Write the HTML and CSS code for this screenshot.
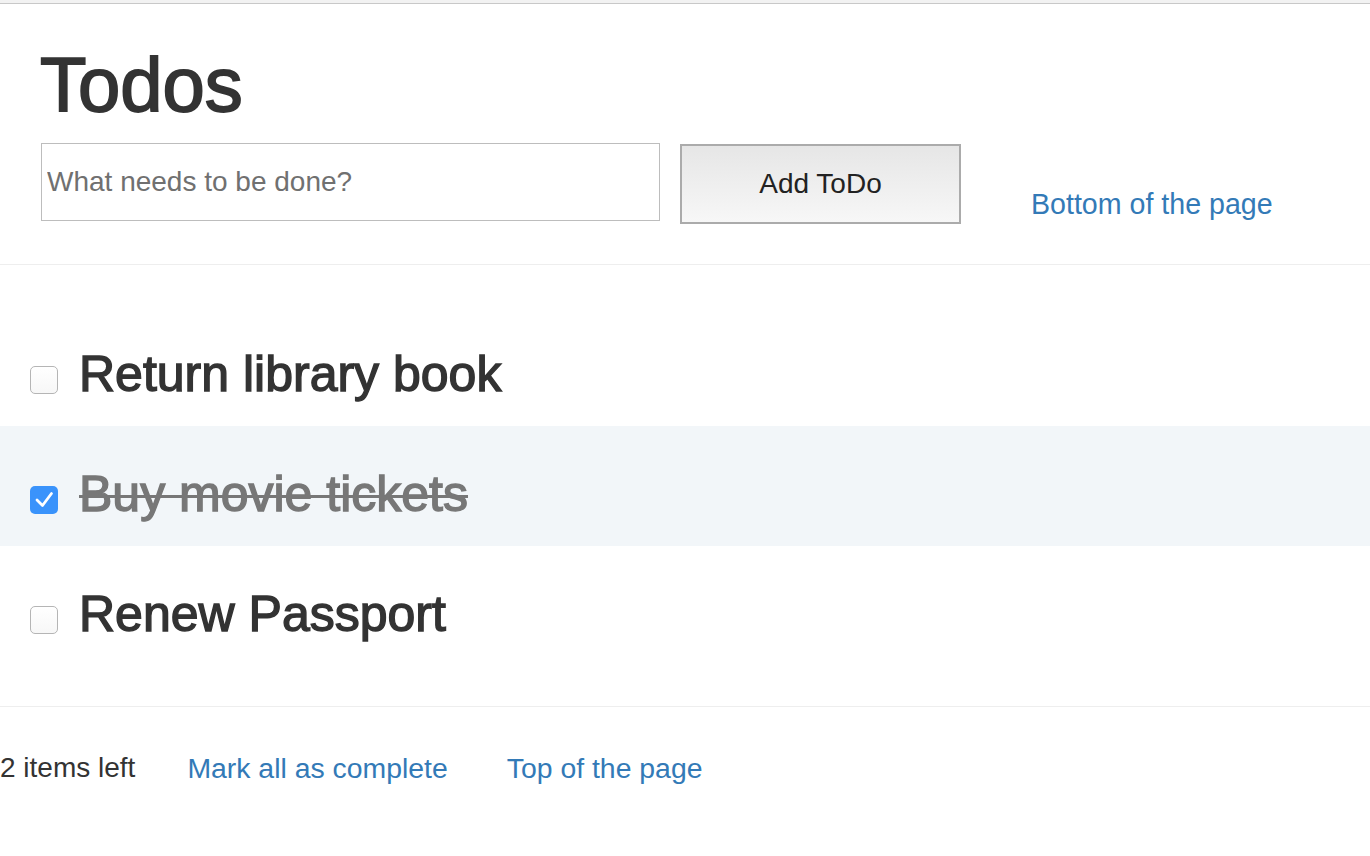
FILE: index.html
```html
<!DOCTYPE html>
<html lang="en">
<head>
<meta charset="utf-8">
<title>Todos</title>
<link rel="stylesheet" href="styles.css">
</head>
<body>
<div class="chrome"></div>
<header class="header">
  <h1 class="title">Todos</h1>
  <form class="new-todo" onsubmit="return false">
    <input class="todo-input" type="text" placeholder="What needs to be done?">
    <button class="add-btn" type="submit">Add ToDo</button>
    <a class="link bottom-link" href="#bottom">Bottom of the page</a>
  </form>
</header>
<hr class="rule rule-top">
<ul class="todo-list">
  <li class="todo">
    <span class="box"></span>
    <span class="todo-text">Return library book</span>
  </li>
  <li class="todo done">
    <span class="box checked"><svg viewBox="0 0 28 28" width="28" height="28"><path d="M7 14 L12.5 19.5 L21.5 7.5" fill="none" stroke="#fff" stroke-width="2.8" stroke-linecap="round" stroke-linejoin="round"/></svg></span>
    <span class="todo-text">Buy movie tickets</span>
  </li>
  <li class="todo">
    <span class="box"></span>
    <span class="todo-text">Renew Passport</span>
  </li>
</ul>
<hr class="rule rule-bottom">
<footer class="footer" id="bottom">
  <span class="count">2 items left</span>
  <a class="link mark-all" href="#">Mark all as complete</a>
  <a class="link top-link" href="#">Top of the page</a>
</footer>
</body>
</html>
```

FILE: styles.css
```css
html, body {
  margin: 0;
  padding: 0;
  background: #fff;
}
body {
  font-family: "Liberation Sans", Arial, Helvetica, sans-serif;
  color: #333;
}
.chrome {
  height: 3px;
  background: #f2f2f2;
  border-bottom: 1px solid #c8c8c8;
}
.header {
  padding-left: 40px;
}
.title {
  margin: 39px 0 0 0;
  font-size: 76px;
  line-height: 1.1;
  font-weight: 400;
  -webkit-text-stroke: 1.8px #333;
  color: #333;
}
.new-todo {
  display: flex;
  align-items: flex-start;
  margin-top: 16px;
}
.todo-input {
  box-sizing: border-box;
  width: 619px;
  height: 78px;
  margin: 0 0 0 1px;
  border: 1px solid #bdbdbd;
  padding: 0 0 0 5px;
  font-family: "Liberation Sans", Arial, sans-serif;
  font-size: 28px;
  color: #333;
  outline: none;
}
.todo-input::placeholder {
  color: #707070;
}
.add-btn {
  box-sizing: border-box;
  width: 281px;
  height: 80px;
  margin: 1px 0 0 20px;
  border: 2px solid #ababab;
  background: linear-gradient(#e6e6e6, #f7f7f7);
  font-family: "Liberation Sans", Arial, sans-serif;
  font-size: 28px;
  color: #222;
  padding: 0;
}
.link {
  color: #337ab7;
  text-decoration: none;
  font-size: 28.4px;
  line-height: 1.15;
}
.bottom-link {
  margin: 45px 0 0 70px;
  font-size: 28.6px;
}
.rule {
  border: 0;
  border-top: 1px solid #eee;
  margin: 0;
}
.rule-top {
  margin-top: 40px;
}
.todo-list {
  list-style: none;
  margin: 41px 0 0 0;
  padding: 0;
}
.todo {
  box-sizing: border-box;
  height: 120px;
  display: flex;
  align-items: flex-start;
  padding: 41px 0 0 30px;
}
.todo.done {
  background: #f2f6f9;
}
.box {
  box-sizing: border-box;
  flex: none;
  width: 28px;
  height: 28px;
  margin-top: 19px;
  border: 1px solid #b5b5b5;
  border-radius: 5px;
  background: linear-gradient(#ffffff, #f7f7f7);
}
.box.checked {
  border: 0;
  background: #3a93fb;
}
.box svg {
  display: block;
}
.todo-text {
  margin-left: 21px;
  font-size: 50px;
  line-height: 1.1;
  color: #333;
  -webkit-text-stroke: 1.4px #333;
}
.done .todo-text {
  color: #777;
  -webkit-text-stroke: 1.4px #777;
  text-decoration: line-through;
  text-decoration-thickness: 3px;
}
.rule-bottom {
  margin-top: 40px;
}
.footer {
  display: flex;
  align-items: flex-start;
  margin-top: 45px;
  font-size: 28px;
  line-height: 1.15;
}
.count {
  color: #333;
}
.mark-all {
  margin-left: 52px;
}
.top-link {
  margin-left: 59px;
}
```
